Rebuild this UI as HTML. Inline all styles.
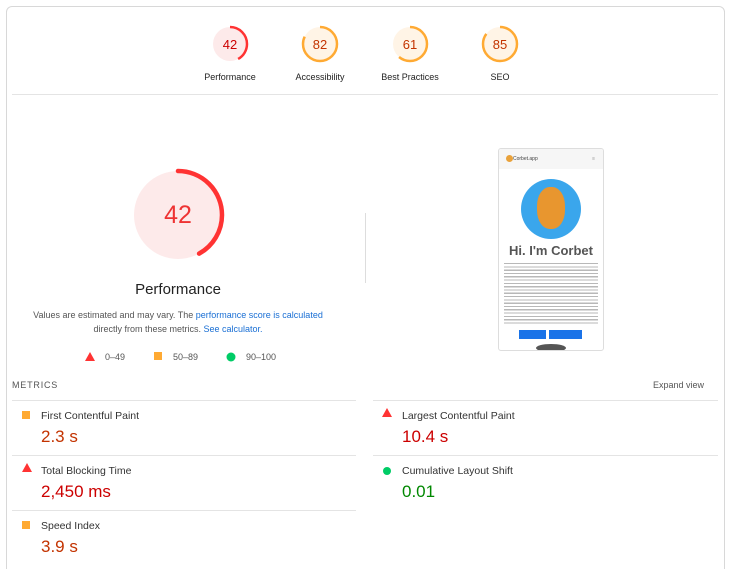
<!DOCTYPE html>
<html style="height:569px;overflow:hidden"><head><meta charset="utf-8"><style>
body{margin:0;width:729px;height:569px;background:#fff;font-family:"Liberation Sans",Arial,sans-serif;position:relative;overflow:hidden;color:#212121}
.a{position:absolute}
.card{left:6px;top:6px;width:717px;height:575px;border:1px solid #d8d8d8;border-radius:6px}
.lbl{font-size:9px;color:#222;text-align:center;width:90px}
.hr{height:1px;background:#e4e4e4}
.mt{font-size:10.5px;color:#333}
.mv{font-size:17px}
.o{color:#c33300}.r{color:#c00}.g{color:#080}
</style></head><body>
<div class="a card"></div>
<svg class="a" style="left:0;top:0" width="729" height="569">
 <g transform="rotate(-90)">
  <circle cx="-44" cy="230" r="17" fill="#fdeaea"/>
  <circle cx="-44" cy="230" r="17" fill="none" stroke="#f33" stroke-width="2.5" stroke-dasharray="44.9 200"/>
  <circle cx="-44" cy="320" r="17" fill="#fff4e6"/>
  <circle cx="-44" cy="320" r="17" fill="none" stroke="#fa3" stroke-width="2.5" stroke-dasharray="87.6 200"/>
  <circle cx="-44" cy="410" r="17" fill="#fff4e6"/>
  <circle cx="-44" cy="410" r="17" fill="none" stroke="#fa3" stroke-width="2.5" stroke-dasharray="65.2 200"/>
  <circle cx="-44" cy="500" r="17" fill="#fff4e6"/>
  <circle cx="-44" cy="500" r="17" fill="none" stroke="#fa3" stroke-width="2.5" stroke-dasharray="90.8 200"/>
  <circle cx="-215" cy="178" r="44" fill="#fdeaea"/>
  <circle cx="-215" cy="178" r="44" fill="none" stroke="#f33" stroke-width="4.5" stroke-linecap="round" stroke-dasharray="116 400"/>
 </g>
 <text x="230" y="49" font-size="13" fill="#c00" text-anchor="middle" font-family="Liberation Sans">42</text>
 <text x="320" y="49" font-size="13" fill="#c33300" text-anchor="middle" font-family="Liberation Sans">82</text>
 <text x="410" y="49" font-size="13" fill="#c33300" text-anchor="middle" font-family="Liberation Sans">61</text>
 <text x="500" y="49" font-size="13" fill="#c33300" text-anchor="middle" font-family="Liberation Sans">85</text>
 <text x="178" y="223" font-size="25" fill="#e33" text-anchor="middle" font-family="Liberation Sans">42</text>
 <polygon points="90,352 95,361 85,361" fill="#f33"/>
 <rect x="154" y="352" width="8" height="8" fill="#fa3"/>
 <circle cx="231" cy="357" r="4.5" fill="#0c6"/>
 <polygon points="27,463 32,472 22,472" fill="#f33"/>
 <rect x="22" y="411" width="8" height="8" fill="#fa3"/>
 <rect x="22" y="521" width="8" height="8" fill="#fa3"/>
 <polygon points="387,408 392,417 382,417" fill="#f33"/>
 <circle cx="387" cy="471" r="4" fill="#0c6"/>
</svg>
<div class="a lbl" style="left:185px;top:72px">Performance</div>
<div class="a lbl" style="left:275px;top:72px">Accessibility</div>
<div class="a lbl" style="left:365px;top:72px">Best Practices</div>
<div class="a lbl" style="left:455px;top:72px">SEO</div>
<div class="a hr" style="left:12px;top:94px;width:706px"></div>
<div class="a" style="left:78px;top:281px;width:200px;text-align:center;font-size:15px;color:#222">Performance</div>
<div class="a" style="left:20px;top:308px;width:316px;text-align:center;font-size:9px;line-height:14px;color:#555">Values are estimated and may vary. The <span style="color:#1a6fd4">performance score is calculated</span><br>directly from these metrics. <span style="color:#1a6fd4">See calculator.</span></div>
<div class="a" style="left:105px;top:352px;font-size:9px;color:#555">0–49</div>
<div class="a" style="left:173px;top:352px;font-size:9px;color:#555">50–89</div>
<div class="a" style="left:246px;top:352px;font-size:9px;color:#555">90–100</div>
<div class="a" style="left:365px;top:213px;width:1px;height:70px;background:#ddd"></div>
<div class="a" style="left:498px;top:148px;width:104px;height:201px;border:1px solid #ddd;border-radius:3px;background:#fff;overflow:hidden">
 <div style="height:20px;background:#f6f6f6;font-size:5px;color:#444;line-height:20px;padding-left:14px;position:relative"><span style="position:absolute;left:7px;top:6px;width:7px;height:7px;border-radius:50%;background:#e9a23b"></span>Corbet.app<span style="position:absolute;right:8px;top:0;color:#999">≡</span></div>
 <div style="margin:10px auto 0;width:60px;height:60px;border-radius:50%;background:#3aa6ec;position:relative"><div style="position:absolute;left:16px;top:8px;width:28px;height:42px;border-radius:45%;background:#e8962f"></div></div>
 <div style="text-align:center;font-size:13px;font-weight:bold;color:#555;margin-top:4px">Hi. I'm Corbet</div>
 <div style="margin:4px 5px 0;height:62px;background:repeating-linear-gradient(#fff 0,#fff 1px,#888 1px,#888 2.2px,#fff 2.2px,#fff 3.3px);opacity:.6"></div>
 <div style="position:absolute;left:20px;top:181px;width:27px;height:9px;background:#1a73e8"></div>
 <div style="position:absolute;left:50px;top:181px;width:33px;height:9px;background:#1a73e8"></div>
 <div style="position:absolute;left:37px;top:195px;width:30px;height:8px;border-radius:50%;background:#555"></div>
</div>
<div class="a" style="left:12px;top:380px;font-size:9px;letter-spacing:.8px;color:#555">METRICS</div>
<div class="a" style="left:653px;top:380px;font-size:9px;color:#555">Expand view</div>
<div class="a hr" style="left:12px;top:400px;width:344px"></div>
<div class="a hr" style="left:373px;top:400px;width:345px"></div>
<div class="a hr" style="left:12px;top:455px;width:344px"></div>
<div class="a hr" style="left:373px;top:455px;width:345px"></div>
<div class="a hr" style="left:12px;top:510px;width:344px"></div>
<div class="a mt" style="left:41px;top:410px">First Contentful Paint</div>
<div class="a mv o" style="left:41px;top:427px">2.3 s</div>
<div class="a mt" style="left:41px;top:465px">Total Blocking Time</div>
<div class="a mv r" style="left:41px;top:482px">2,450 ms</div>
<div class="a mt" style="left:41px;top:520px">Speed Index</div>
<div class="a mv o" style="left:41px;top:537px">3.9 s</div>
<div class="a mt" style="left:402px;top:410px">Largest Contentful Paint</div>
<div class="a mv r" style="left:402px;top:427px">10.4 s</div>
<div class="a mt" style="left:402px;top:465px">Cumulative Layout Shift</div>
<div class="a mv g" style="left:402px;top:482px">0.01</div>
</body></html>
